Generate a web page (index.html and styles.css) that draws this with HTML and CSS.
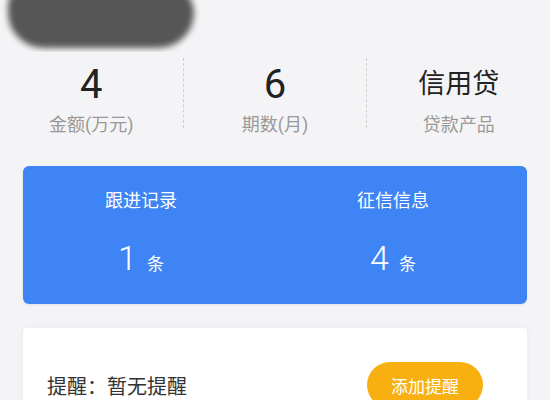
FILE: index.html
```html
<!DOCTYPE html>
<html lang="zh-CN">
<head>
  <meta charset="UTF-8" />
  <title>客户详情</title>
  <meta name="viewport" content="width=device-width, initial-scale=1" />
  <link rel="stylesheet" href="styles.css">
</head>
<body>

  <!-- 客户姓名（已遮挡） -->
  <header class="top">
    <div class="smudge"></div>
  </header>

  <!-- 贷款概要 -->
  <section class="summary">
    <div class="cell">
      <div class="value">4</div>
      <div class="label">金额(万元)</div>
    </div>
    <div class="cell">
      <div class="value">6</div>
      <div class="label">期数(月)</div>
    </div>
    <div class="cell">
      <div class="value value-text">信用贷</div>
      <div class="label">贷款产品</div>
    </div>
  </section>

  <!-- 记录卡片 -->
  <section class="records">
    <div class="record">
      <div class="record-title">跟进记录</div>
      <div class="record-count"><span class="num">1</span><span class="unit">条</span></div>
    </div>
    <div class="record">
      <div class="record-title">征信信息</div>
      <div class="record-count"><span class="num">4</span><span class="unit">条</span></div>
    </div>
  </section>

  <!-- 提醒 -->
  <section class="remind">
    <div class="remind-text">提醒：暂无提醒</div>
    <button class="remind-btn">添加提醒</button>
  </section>

</body>
</html>
```

FILE: styles.css
```css
:root {
  --bleu: #3e84f4;
  --orange: #f8b010;
  --fond: #f4f4f6;
  --texte: #333333;
  --gris: #999999;
}

body {
  margin: 0;
  font-family: Roboto, "Noto Sans CJK SC", sans-serif;
  background: var(--fond);
  color: var(--texte);
  overflow: hidden;
}

.top {
  height: 52px;
  overflow: hidden;
}

.smudge {
  width: 186px;
  height: 62px;
  margin: -14px 0 0 8px;
  background: #565656;
  border-radius: 22px 30px 40px 40px;
  filter: blur(3px);
}

.summary {
  display: flex;
  padding: 6px 0 0;
  height: 82px;
}

.summary .cell {
  flex: 1;
  text-align: center;
  border-right: 1px dashed #cfcfcf;
  margin: 0 0 12px;
}

.summary .cell:last-child {
  border-right: none;
}

.value {
  font-size: 40px;
  line-height: 50px;
  margin-top: 2px;
  color: #222;
}

.value-text {
  font-size: 27px;
  line-height: 48px;
}

.label {
  font-size: 18px;
  line-height: 24px;
  margin-top: 3px;
  color: var(--gris);
}

.value-text + .label {
  margin-top: 5px;
}

.records {
  display: grid;
  grid-template-columns: 236px 1fr;
  margin: 26px 23px 0;
  height: 138px;
  background: var(--bleu);
  border-radius: 6px;
  color: white;
  box-shadow: 0 1px 3px rgba(0, 0, 0, 0.08);
}

.record {
  text-align: center;
  padding-top: 22px;
}

.record-title {
  font-size: 18px;
  line-height: 26px;
}

.record-count {
  margin-top: 24px;
  line-height: 40px;
}

.record-count .num {
  font-size: 34px;
  font-weight: 300;
}

.record-count .unit {
  font-size: 17px;
  margin-left: 10px;
}

.remind {
  display: flex;
  justify-content: space-between;
  align-items: center;
  margin: 24px 23px 0;
  padding: 34px 44px 20px 24px;
  height: 46px;
  background: white;
  border-radius: 4px;
  box-shadow: 0 0 6px rgba(0, 0, 0, 0.05);
}

.remind-text {
  font-size: 20px;
  color: var(--texte);
}

.remind-btn {
  background: var(--orange);
  color: white;
  border: none;
  border-radius: 24px;
  width: 116px;
  height: 46px;
  font-family: inherit;
  font-size: 17px;
}
```
